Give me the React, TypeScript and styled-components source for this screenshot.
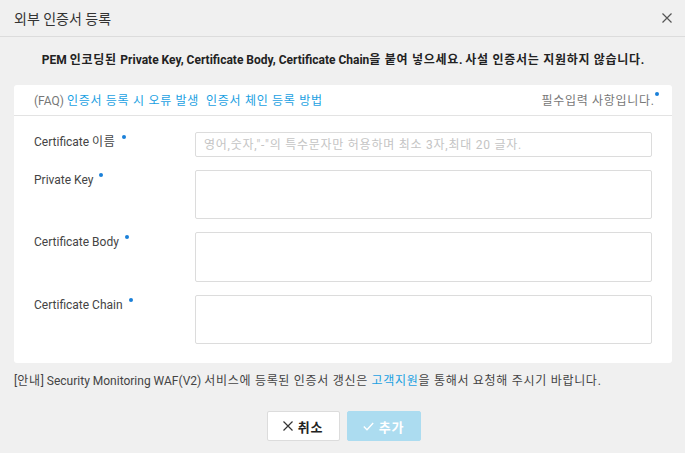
import React from "react";
import styled, { createGlobalStyle } from "styled-components";

const Global = createGlobalStyle`
  html, body { margin: 0; padding: 0; background: #f0f0f0; }
  body { font-family: Roboto, "Noto Sans CJK KR", sans-serif; color: #333; }
  * { box-sizing: border-box; }
`;

const Ko = styled.span`
  letter-spacing: 0.7px;
`;

const HANGUL = /([\u1100-\u11FF\u3130-\u318F\uAC00-\uD7AF][\u1100-\u11FF\u3130-\u318F\uAC00-\uD7AF ]*)/;

function ko(text: string) {
  return text.split(HANGUL).map((part, i) =>
    HANGUL.test(part) ? <Ko key={i}>{part}</Ko> : <React.Fragment key={i}>{part}</React.Fragment>
  );
}

const Dialog = styled.div`
  width: 685px;
  height: 453px;
  background: #f0f0f0;
  display: flex;
  flex-direction: column;
`;

const Header = styled.div`
  height: 37px;
  border-bottom: 1px solid #dcdcdc;
  display: flex;
  align-items: center;
  justify-content: space-between;
  padding: 0 12px 1px 14px;
`;

const Title = styled.h1`
  margin: 0;
  font-size: 14px;
  font-weight: 400;
  color: #333;
`;

const CloseBtn = styled.button`
  border: 0;
  background: none;
  padding: 0;
  width: 12px;
  height: 12px;
  display: flex;
  align-items: center;
  justify-content: center;
  cursor: pointer;
`;

const Body = styled.div`
  padding: 0 13px 0 14px;
  display: flex;
  flex-direction: column;
`;

const Lead = styled.p`
  margin: 14px 0 0;
  text-align: center;
  font-size: 12px;
  font-weight: 700;
  line-height: 18px;
  color: #222;
`;

const Card = styled.div`
  margin-top: 16px;
  background: #fff;
  border-radius: 3px;
`;

const CardTop = styled.div`
  height: 31px;
  border-bottom: 1px solid #e3e3e3;
  display: flex;
  align-items: center;
  justify-content: space-between;
  padding: 0 13px 1px 20px;
  font-size: 12px;
`;

const Muted = styled.span`
  color: #777;
`;

const Link = styled.a`
  color: #1ba1e2;
  text-decoration: none;
  margin-left: 3px;
  & + & { margin-left: 7px; }
`;

const InlineLink = styled.span`
  color: #1ba1e2;
`;

const Dot = styled.span<{ $gap?: number }>`
  display: inline-block;
  width: 4px;
  height: 4px;
  border-radius: 50%;
  background: #1a80d9;
  vertical-align: top;
  margin-left: ${(p) => p.$gap ?? 6}px;
  margin-top: 1px;
`;

const Form = styled.div`
  padding: 16px 20px 19px;
  display: flex;
  flex-direction: column;
  gap: 13px;
`;

const Row = styled.div`
  display: grid;
  grid-template-columns: 161px 1fr;
`;

const Label = styled.label`
  font-size: 12px;
  line-height: 16px;
  padding-top: 2px;
  color: #444;
`;

const Input = styled.input`
  height: 25px;
  border: 1px solid #dcdcdc;
  border-radius: 2px;
  padding: 0 8px;
  font-family: inherit;
  font-size: 12px;
  letter-spacing: 0.75px;
  color: #333;
  outline: none;
  &::placeholder { color: #c4c4c4; }
`;

const TextArea = styled.textarea<{ $h: number }>`
  height: ${(p) => p.$h}px;
  border: 1px solid #dcdcdc;
  border-radius: 2px;
  resize: none;
  outline: none;
  font-family: inherit;
  font-size: 12px;
`;

const Note = styled.p`
  margin: 10px 0 0;
  font-size: 12px;
  line-height: 16px;
  color: #444;
`;

const Buttons = styled.div`
  margin-top: 22px;
  display: flex;
  justify-content: center;
  gap: 7px;
  padding-left: 1px;
`;

const Button = styled.button<{ $primary?: boolean }>`
  height: 30px;
  width: ${(p) => (p.$primary ? 74 : 73)}px;
  border: 1px solid ${(p) => (p.$primary ? "#acdcf0" : "#dcdcdc")};
  background: ${(p) => (p.$primary ? "#acdcf0" : "#fff")};
  color: ${(p) => (p.$primary ? "#fff" : "#222")};
  border-radius: 2px;
  font-family: inherit;
  font-size: 13px;
  font-weight: 700;
  display: flex;
  align-items: center;
  justify-content: center;
  gap: 5px;
  padding: 0;
`;

const fields = [
  { label: "Certificate 이름", kind: "input" as const, h: 25 },
  { label: "Private Key", kind: "area" as const, h: 49 },
  { label: "Certificate Body", kind: "area" as const, h: 50 },
  { label: "Certificate Chain", kind: "area" as const, h: 49 },
];

export default function App() {
  return (
    <>
      <Global />
      <Dialog>
        <Header>
          <Title>외부 인증서 등록</Title>
          <CloseBtn aria-label="닫기">
            <svg width="10" height="10" viewBox="0 0 10 10">
              <path d="M0.5 0.5L9.5 9.5M9.5 0.5L0.5 9.5" stroke="#555" strokeWidth="1.2" />
            </svg>
          </CloseBtn>
        </Header>
        <Body>
          <Lead>
            {ko("PEM 인코딩된 Private Key, Certificate Body, Certificate Chain을 붙여 넣으세요. 사설 인증서는 지원하지 않습니다.")}
          </Lead>
          <Card>
            <CardTop>
              <span>
                <Muted>(FAQ)</Muted>
                <Link href="#">{ko("인증서 등록 시 오류 발생")}</Link>
                <Link href="#">{ko("인증서 체인 등록 방법")}</Link>
              </span>
              <span>
                <Muted>{ko("필수입력 사항입니다.")}</Muted>
                <Dot $gap={1} />
              </span>
            </CardTop>
            <Form>
              {fields.map((f) => (
                <Row key={f.label}>
                  <Label>
                    {ko(f.label)}
                    <Dot />
                  </Label>
                  {f.kind === "input" ? (
                    <Input placeholder={'영어,숫자,"-"의 특수문자만 허용하며 최소 3자,최대 20 글자.'} />
                  ) : (
                    <TextArea $h={f.h} />
                  )}
                </Row>
              ))}
            </Form>
          </Card>
          <Note>
            {ko("[안내] Security Monitoring WAF(V2) 서비스에 등록된 인증서 갱신은 ")}
            <InlineLink>{ko("고객지원")}</InlineLink>
            {ko("을 통해서 요청해 주시기 바랍니다.")}
          </Note>
          <Buttons>
            <Button>
              <svg width="10" height="10" viewBox="0 0 10 10">
                <path d="M0.5 0.5L9.5 9.5M9.5 0.5L0.5 9.5" stroke="#333" strokeWidth="1.2" />
              </svg>
              {ko("취소")}
            </Button>
            <Button $primary>
              <svg width="11" height="9" viewBox="0 0 11 9">
                <path d="M0.8 4.5L4 7.7L10.2 1" stroke="#fff" strokeWidth="1.4" fill="none" />
              </svg>
              {ko("추가")}
            </Button>
          </Buttons>
        </Body>
      </Dialog>
    </>
  );
}
